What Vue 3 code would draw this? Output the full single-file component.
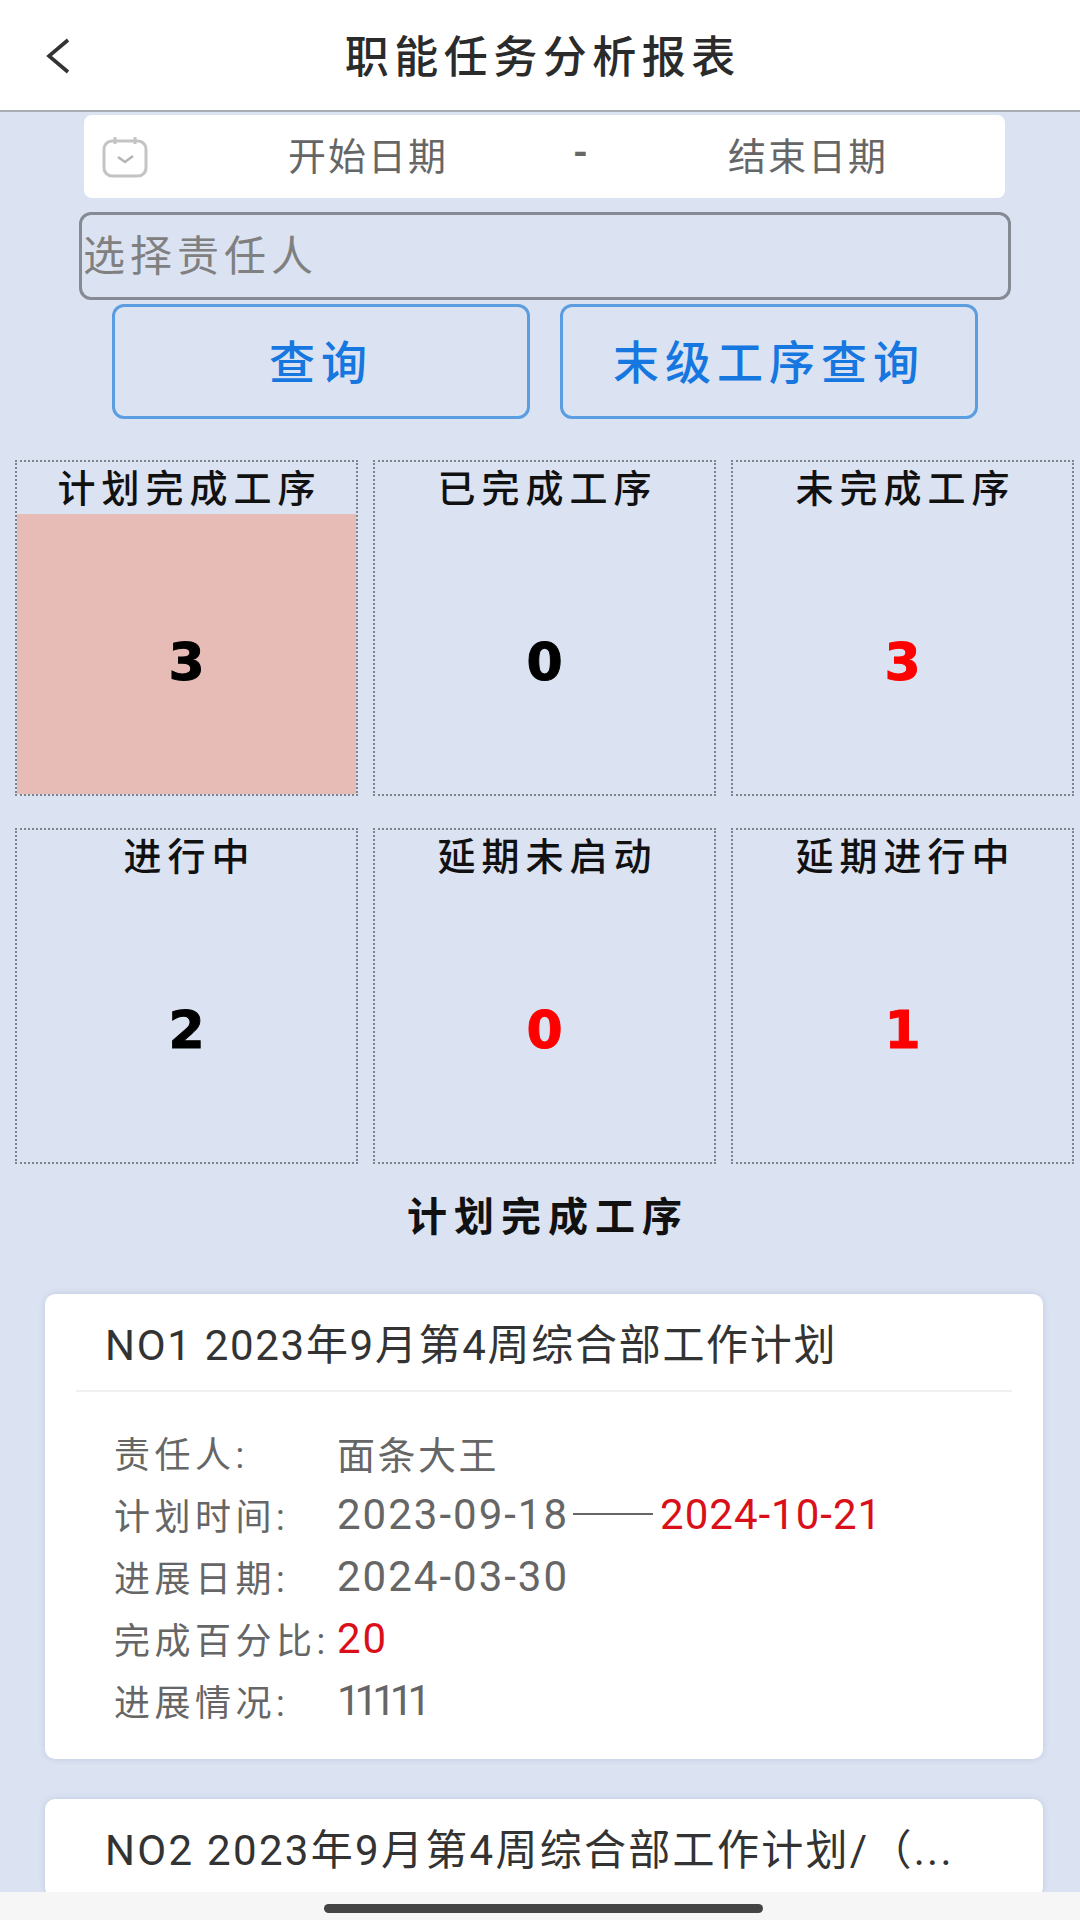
<script setup>
import { ref } from 'vue';

const stats = ref([
    { title: '计划完成工序', value: 3, active: true },
    { title: '已完成工序', value: 0 },
    { title: '未完成工序', value: 3, red: true },
    { title: '进行中', value: 2 },
    { title: '延期未启动', value: 0, red: true },
    { title: '延期进行中', value: 1, red: true },
]);
</script>

<template>
    <div class="page">
        <div class="header">
            <svg class="back" width="26" height="36" viewBox="0 0 26 36">
                <polyline points="23,2 4,18 23,34" fill="none" stroke="#333" stroke-width="3.6" />
            </svg>
            <div class="header-title">职能任务分析报表</div>
        </div>

        <div class="content">
            <div class="date-box">
                <svg class="calendar" width="46" height="42" viewBox="0 0 46 42">
                    <rect x="2" y="5" width="42" height="35" rx="8" fill="none" stroke="#c4c4c4" stroke-width="3" />
                    <path d="M13 1v7M33 1v7" stroke="#c4c4c4" stroke-width="3" />
                    <polyline points="16,21 23,26 31,20" fill="none" stroke="#b5b5b5" stroke-width="2.6" />
                </svg>
                <span class="date-start">开始日期</span>
                <span class="date-dash">-</span>
                <span class="date-end">结束日期</span>
            </div>

            <input class="person-input" type="text" placeholder="选择责任人" />

            <div class="btn-row">
                <button class="query-btn"><span>查询</span></button>
                <button class="query-btn"><span>末级工序查询</span></button>
            </div>

            <div class="stat-grid">
                <div class="stat-card" v-for="item in stats" :key="item.title">
                    <div class="stat-title">{{ item.title }}</div>
                    <div class="stat-value" :class="{ active: item.active, red: item.red }">{{ item.value }}</div>
                </div>
            </div>

            <div class="section-title">计划完成工序</div>

            <div class="task-card">
                <div class="task-title">NO1 2023年9月第4周综合部工作计划</div>
                <div class="task-body">
                    <div class="task-row"><span class="label">责任人:</span><span class="name">面条大王</span></div>
                    <div class="task-row">
                        <span class="label">计划时间:</span>
                        <span class="num">2023-09-18</span><span class="long-dash"></span><span class="num red-text tight">2024-10-21</span>
                    </div>
                    <div class="task-row"><span class="label">进展日期:</span><span class="num">2024-03-30</span></div>
                    <div class="task-row"><span class="label">完成百分比:</span><span class="num red-text">20</span></div>
                    <div class="task-row"><span class="label">进展情况:</span><span class="num ones">11111</span></div>
                </div>
            </div>

            <div class="task-card">
                <div class="task-title wide">NO2 2023年9月第4周综合部工作计划/（...</div>
            </div>
        </div>

        <div class="home-bar">
            <div class="home-handle"></div>
        </div>
    </div>
</template>

<style>
html, body {
    margin: 0;
    background: #dbe3f2;
}
</style>

<style scoped>
.page {
    width: 1080px;
    height: 1920px;
    display: flex;
    flex-direction: column;
    overflow: hidden;
    background: #dbe3f2;
    font-family: Roboto, "Noto Sans CJK SC", sans-serif;
}

.header {
    height: 112px;
    flex-shrink: 0;
    display: flex;
    align-items: center;
    justify-content: center;
    position: relative;
    background: #fff;
    border-bottom: 2px solid #a9acb2;
    box-sizing: border-box;
}

.back {
    position: absolute;
    left: 45px;
    top: 38px;
}

.header-title {
    font-size: 44px;
    letter-spacing: 5.5px;
    text-indent: 5.5px;
    color: #2b2b2b;
    font-weight: 500;
    margin-top: -2px;
}

.content {
    flex: 1;
    min-height: 0;
    overflow: hidden;
    padding: 3px 6px 0 15px;
}

.date-box {
    height: 83px;
    margin: 0 69px;
    display: flex;
    align-items: center;
    padding-left: 18px;
    background: #fff;
    border-radius: 8px;
    font-size: 38px;
    letter-spacing: 2px;
    color: #666;
}

.calendar {
    flex-shrink: 0;
}

.date-start {
    margin-left: 140px;
    margin-top: -7px;
}

.date-dash {
    margin-left: 125px;
    margin-top: -7px;
    font-weight: 700;
    width: 16px;
}

.date-end {
    margin-left: 139px;
    margin-top: -7px;
}

.person-input {
    display: block;
    width: 932px;
    height: 88px;
    box-sizing: border-box;
    margin: 14px 0 0 64px;
    padding: 0 0 0 1px;
    border: 3px solid #858a94;
    border-radius: 12px;
    background: transparent;
    outline: none;
    font-family: inherit;
    font-size: 42px;
    letter-spacing: 5px;
}

.person-input::placeholder {
    color: #808080;
    opacity: 1;
}

.btn-row {
    display: grid;
    grid-template-columns: 418px 418px;
    gap: 30px;
    margin: 4px 0 0 97px;
}

.query-btn {
    height: 115px;
    box-sizing: border-box;
    border: 3px solid #5a9de0;
    border-radius: 12px;
    background: transparent;
    color: #1677e0;
    font-family: inherit;
    font-size: 46px;
    font-weight: 500;
    letter-spacing: 6px;
    padding: 0 0 6px;
}

.stat-grid {
    display: grid;
    grid-template-columns: repeat(3, 343px);
    grid-auto-rows: 336px;
    column-gap: 15px;
    row-gap: 32px;
    margin-top: 41px;
}

.stat-card {
    display: flex;
    flex-direction: column;
    box-sizing: border-box;
    border: 2px dotted #7f838a;
}

.stat-title {
    height: 52px;
    flex-shrink: 0;
    display: flex;
    align-items: center;
    justify-content: center;
    padding-bottom: 5px;
    box-sizing: border-box;
    font-size: 38px;
    font-weight: 500;
    letter-spacing: 6px;
    text-indent: 6px;
    color: #111;
}

.stat-value {
    flex: 1;
    display: flex;
    align-items: center;
    justify-content: center;
    padding-top: 16px;
    box-sizing: border-box;
    font-family: "DejaVu Sans", sans-serif;
    font-size: 52px;
    font-weight: 700;
    color: #000;
    -webkit-text-stroke: 1px currentColor;
}

.stat-value.active {
    background: #e8bcb6;
}

.stat-value.red {
    color: #f00;
}

.section-title {
    height: 70px;
    margin-top: 15px;
    display: flex;
    align-items: center;
    justify-content: center;
    font-size: 40px;
    font-weight: 700;
    letter-spacing: 7px;
    text-indent: 7px;
    color: #111;
}

.task-card {
    margin: 0 31px 0 30px;
    margin-top: 40px;
    padding: 0 31px;
    background: #fff;
    border-radius: 10px;
    box-shadow: 0 0 6px rgba(150, 165, 200, .4);
}

.section-title + .task-card {
    margin-top: 45px;
}

.task-title {
    height: 98px;
    box-sizing: border-box;
    padding: 0 0 2px 29px;
    display: flex;
    align-items: center;
    border-bottom: 2px solid #f0f0f0;
    font-size: 42px;
    letter-spacing: 1.7px;
    color: #333;
    white-space: nowrap;
}

.task-title.wide {
    letter-spacing: 2.3px;
}

.task-body {
    padding: 29px 0 28px 38px;
}

.task-row {
    height: 62px;
    display: flex;
    align-items: center;
    color: #666;
}

.label {
    width: 223px;
    flex-shrink: 0;
    font-size: 36px;
    letter-spacing: 4.5px;
    white-space: nowrap;
}

.name {
    font-size: 38px;
    letter-spacing: 2.5px;
}

.num {
    font-size: 42px;
    letter-spacing: 2px;
}

.num.tight {
    letter-spacing: 1px;
}

.num.ones {
    letter-spacing: -6px;
}

.long-dash {
    width: 80px;
    height: 2px;
    margin: 0 7px 0 4px;
    background: #666;
}

.red-text {
    color: #d9101a;
}

.home-bar {
    height: 28px;
    flex-shrink: 0;
    display: flex;
    justify-content: center;
    padding-top: 12px;
    box-sizing: border-box;
    background: #f6f6f6;
}

.home-handle {
    width: 439px;
    height: 9px;
    margin-right: -7px;
    border-radius: 5px;
    background: #444;
}
</style>
